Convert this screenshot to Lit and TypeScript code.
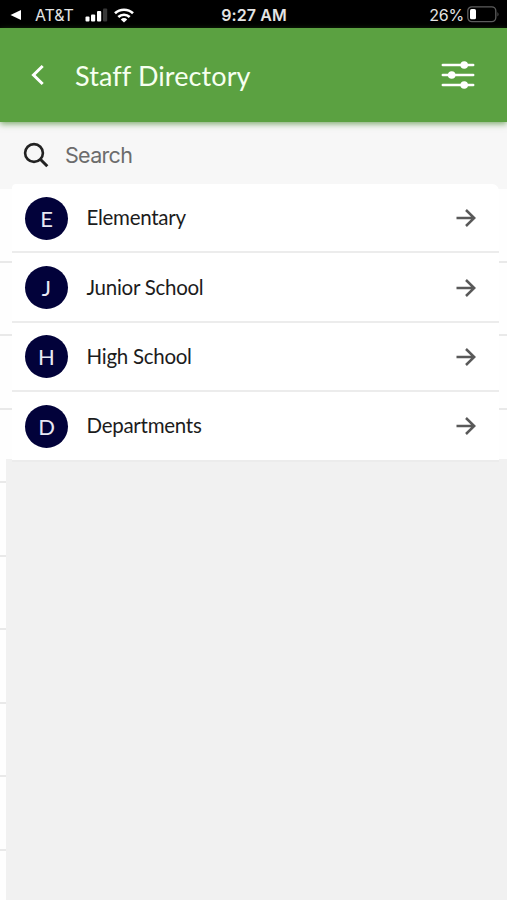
import { LitElement, html, css, svg } from "lit";
import { customElement, property } from "lit/decorators.js";

@customElement("status-bar")
class StatusBar extends LitElement {
  static styles = css`
    :host {
      display: grid;
      grid-template-columns: 1fr auto 1fr;
      align-items: center;
      height: 28px;
      padding: 2px 7px 0 10px;
      box-sizing: border-box;
      background: #000;
      color: #e4e4e4;
      font: 400 16px/26px Inter, sans-serif;
    }
    svg { display: block; flex: none; }
    .left, .right { display: flex; align-items: center; }
    .right { justify-content: flex-end; gap: 3px; }
    .carrier { margin-left: 14px; width: 40px; letter-spacing: -0.1px; white-space: nowrap; }
    .bars { margin-left: 10px; }
    .wifi { margin-left: 6px; }
    .time { font-weight: 600; letter-spacing: 0.1px; margin-right: 2px; }
    .percent { letter-spacing: -0.2px; }
  `;
  render() {
    return html`
      <div class="left">
        <svg width="11" height="12" viewBox="0 0 11 12"><path d="M0.5 6 11 1v10z" fill="#fff" /></svg>
        <span class="carrier">AT&amp;T</span>
        <svg class="bars" width="23" height="14" viewBox="0 0 23 14">
          <g fill="#fff">
            <rect x="0.5" y="8.5" width="4" height="5" rx="1" />
            <rect x="6" y="6.5" width="4.2" height="7" rx="1" />
            <rect x="12" y="3" width="4.2" height="10.5" rx="1" />
          </g>
          <rect x="18" y="0.5" width="4.2" height="13" rx="1" fill="#383838" />
        </svg>
        <svg class="wifi" width="20" height="15" viewBox="0 0 20 15">
          <g fill="none" stroke="#fff" stroke-width="2.6">
            <path d="M1 5.3a13 13 0 0 1 18 0" />
            <path d="M4.3 9a8.2 8.2 0 0 1 11.4 0" />
          </g>
          <path d="M10 14.6 6.8 11.4a4.6 4.6 0 0 1 6.4 0z" fill="#fff" />
        </svg>
      </div>
      <span class="time">9:27 AM</span>
      <div class="right">
        <span class="percent">26%</span>
        <svg width="33" height="18" viewBox="0 0 33 18">
          <rect x="0.8" y="0.8" width="28" height="14.8" rx="4" fill="none" stroke="#5d5d5d" stroke-width="1.3" />
          <rect x="3" y="3" width="6" height="10.3" rx="1.6" fill="#fff" />
          <path d="M30.5 5.9q2 2.3 0 4.6z" fill="#5d5d5d" />
        </svg>
      </div>
    `;
  }
}

@customElement("app-header")
class AppHeader extends LitElement {
  static styles = css`
    :host {
      display: flex;
      align-items: center;
      height: 94px;
      padding: 0 32px 0 31px;
      box-sizing: border-box;
      background: #5ba141;
      color: #fff;
      box-shadow: 0 2px 6px rgba(63, 130, 38, 0.65);
      position: relative;
      z-index: 1;
    }
    svg { display: block; }
    .title {
      flex: 1;
      margin: 2px 0 0 30px;
      font: 400 27px/34px Lato, sans-serif;
      letter-spacing: 0.1px;
      color: #f6fff0;
    }
  `;
  render() {
    return html`
      <svg width="14" height="22" viewBox="0 0 14 22">
        <path d="M11.7 2 2.5 11l9.2 9" fill="none" stroke="#fff" stroke-width="3" />
      </svg>
      <div class="title">Staff Directory</div>
      <svg width="34" height="30" viewBox="0 0 34 30">
        ${[[5, 23.2], [15, 10.7], [25, 23.2]].map(
          ([y, x]) => svg`
            <path d="M1.8 ${y}H32.2" stroke="#fff" stroke-width="2.5" stroke-linecap="round" />
            <circle cx=${x} cy=${y} r="3.8" fill="#fff" />`
        )}
      </svg>
    `;
  }
}

@customElement("directory-row")
class DirectoryRow extends LitElement {
  @property() label = "";
  static styles = css`
    :host {
      display: flex;
      align-items: center;
      height: 69.4px;
      padding: 1px 23px 0 13px;
      box-sizing: border-box;
      border-bottom: 2px solid #ececec;
    }
    .avatar {
      width: 43px;
      height: 43px;
      border-radius: 50%;
      background: #02023a;
      color: #e8e8f4;
      text-align: center;
      font: 400 22px/43px Lato, sans-serif;
    }
    .label {
      flex: 1;
      margin: -2px 0 0 18.5px;
      font: 400 20.5px/28px Lato, sans-serif;
      letter-spacing: -0.27px;
      color: #1c1c1c;
    }
    svg { display: block; }
  `;
  render() {
    return html`
      <div class="avatar">${this.label.charAt(0)}</div>
      <div class="label">${this.label}</div>
      <svg width="20" height="20" viewBox="0 0 20 20">
        <path d="M0.5 10H18M10 2l8.2 8-8.2 8" fill="none" stroke="#595959" stroke-width="2.5" />
      </svg>
    `;
  }
}

@customElement("app-root")
class AppRoot extends LitElement {
  static styles = css`
    :host {
      display: flex;
      flex-direction: column;
      height: 900px;
      overflow: hidden;
      background: #fff;
    }
    .body { flex: 1; min-height: 0; display: grid; }
    .under, .front { grid-area: 1 / 1; min-height: 0; min-width: 0; }
    .under { overflow: hidden; background: #fefefe; }
    .strip { height: 67px; background: #f7f7f7; }
    .line { height: 73.5px; box-sizing: border-box; border-bottom: 2px solid #e9e9e9; }
    .line:first-of-type { margin-top: 0.5px; }
    .front { display: flex; flex-direction: column; }
    .search {
      display: flex;
      align-items: center;
      gap: 16px;
      height: 62px;
      padding: 4px 0 0 23px;
      box-sizing: border-box;
      font: 400 21.5px/28px Inter, sans-serif;
      color: #6c6c6c;
    }
    .search span { letter-spacing: -0.7px; }
    .card { margin: 0 8px 0 12px; background: #fff; border-radius: 4px 7px 0 0; z-index: 1; }
    .rest { flex: 1; margin: -3px 0 0 6px; background: #f1f1f1; }
  `;
  render() {
    return html`
      <status-bar></status-bar>
      <app-header></app-header>
      <div class="body">
        <div class="under">
          <div class="strip"></div>
          ${Array.from({ length: 10 }, () => html`<div class="line"></div>`)}
        </div>
        <div class="front">
          <div class="search">
            <svg width="26" height="26" viewBox="0 0 26 26">
              <g fill="none" stroke="#222" stroke-width="2.6">
                <circle cx="11" cy="11" r="8.9" />
                <path d="M17.3 17.3 24.3 24.3" stroke-width="3" />
              </g>
            </svg>
            <span>Search</span>
          </div>
          <div class="card">
            ${["Elementary", "Junior School", "High School", "Departments"].map(
              (name) => html`<directory-row label=${name}></directory-row>`
            )}
          </div>
          <div class="rest"></div>
        </div>
      </div>
    `;
  }
}
